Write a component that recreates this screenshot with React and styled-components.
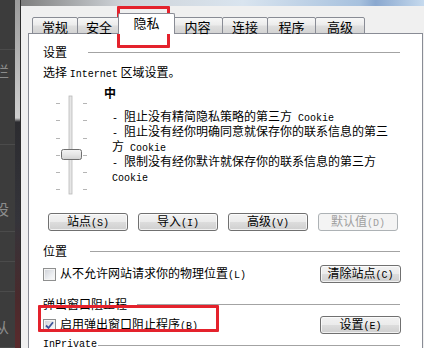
import React from 'react';
import styled, { createGlobalStyle } from 'styled-components';

const GlobalStyle = createGlobalStyle`
  html, body {
    margin: 0;
    padding: 0;
  }
  body {
    width: 424px;
    height: 348px;
    overflow: hidden;
    background: #3b3b3b;
    font-family: "Noto Sans CJK SC", "Liberation Sans", sans-serif;
    font-size: 12px;
    color: #000;
  }
`;

const tabs = [
  { label: '常规', w: 46 },
  { label: '安全', w: 44 },
  { label: '隐私', w: 57, active: true },
  { label: '内容', w: 51 },
  { label: '连接', w: 46 },
  { label: '程序', w: 49 },
  { label: '高级', w: 50 },
];

const backdropCells = [
  { h: 50 },
  { h: 95, ch: '栏', pad: 13 },
  { h: 87, ch: '设', pad: 56 },
  { h: 30 },
  { h: 30 },
  { h: 56, ch: '从', pad: 27 },
];

function Checkbox({ checked }) {
  return (
    <Box>
      {checked && (
        <svg width="9" height="9" viewBox="0 0 9 9">
          <path d="M1 4.5 L3.5 7 L8 1.2" fill="none" stroke="#3d5498" strokeWidth="1.8" />
        </svg>
      )}
    </Box>
  );
}

function Slider() {
  const ticks = [8, 25, 43, 60, 77, 94];
  return (
    <SliderBox>
      <svg width="32" height="100" viewBox="0 0 32 100">
        <defs>
          <linearGradient id="thumb" x1="0" y1="0" x2="0" y2="1">
            <stop offset="0" stopColor="#f4f4f4" />
            <stop offset="0.5" stopColor="#e6e6e6" />
            <stop offset="1" stopColor="#d2d2d2" />
          </linearGradient>
        </defs>
        <rect x="13" y="1" width="3" height="98" fill="#e6e6e6" stroke="#b9b9b9" strokeWidth="0.8" />
        {ticks.map((y) => (
          <g key={y}>
            <line x1="0" y1={y + 0.5} x2="4" y2={y + 0.5} stroke="#b5b5b5" />
            <line x1="27" y1={y + 0.5} x2="31" y2={y + 0.5} stroke="#b5b5b5" />
          </g>
        ))}
        <rect x="5.5" y="54.5" width="20" height="10" rx="2" fill="url(#thumb)" stroke="#6f6f6f" />
      </svg>
    </SliderBox>
  );
}

export default function App() {
  return (
    <Screen>
      <GlobalStyle />
      <Backdrop>
        {backdropCells.map((c, i) => (
          <BackdropCell key={i} $h={c.h} $pad={c.pad}>
            {c.ch && <Ghost>{c.ch}</Ghost>}
          </BackdropCell>
        ))}
      </Backdrop>
      <ScrollRail />
      <Window>
        <TitleEdge />
        <DialogBody>
          <TabRow>
            {tabs.map((t) => (
              <Tab key={t.label} $w={t.w} $active={t.active}>
                {t.label}
              </Tab>
            ))}
          </TabRow>
          <Panel>
            <GroupHeader>
              <span>设置</span>
              <Rule $gap={21} />
            </GroupHeader>
            <Intro>
              选择 <A>Internet</A> 区域设置。
            </Intro>
            <SliderSection>
              <Slider />
              <LevelColumn>
                <Level>中</Level>
                <Desc>
                  <div><A>- </A>阻止没有精简隐私策略的第三方<A> Cookie</A></div>
                  <div><A>- </A>阻止没有经你明确同意就保存你的联系信息的第三</div>
                  <div>方<A> Cookie</A></div>
                  <div><A>- </A>限制没有经你默许就保存你的联系信息的第三方</div>
                  <div><A>Cookie</A></div>
                </Desc>
              </LevelColumn>
            </SliderSection>
            <ButtonRow>
              <Button>站点<A>(S)</A></Button>
              <Button>导入<A>(I)</A></Button>
              <Button>高级<A>(V)</A></Button>
              <Button disabled>默认值<A>(D)</A></Button>
            </ButtonRow>
            <GroupHeader $top={14}>
              <span>位置</span>
              <Rule $gap={23} />
            </GroupHeader>
            <OptionRow $top={8}>
              <CheckLabel>
                <Checkbox />
                <span>从不允许网站请求你的物理位置<A>(L)</A></span>
              </CheckLabel>
              <Button $w={81}>清除站点<A>(C)</A></Button>
            </OptionRow>
            <GroupHeader $top={15}>
              <span>弹出窗口阻止程</span>
              <Rule $gap={10} />
            </GroupHeader>
            <OptionRow $top={6}>
              <CheckLabel>
                <Checkbox checked />
                <span>启用弹出窗口阻止程序<A>(B)</A></span>
              </CheckLabel>
              <Button $w={81}>设置<A>(E)</A></Button>
            </OptionRow>
            <GroupHeader $top={5}>
              <A>InPrivate</A>
              <Rule $gap={1} />
            </GroupHeader>
          </Panel>
        </DialogBody>
      </Window>
      <Annotation $left={117} $top={6} $w={53} $h={42} />
      <Annotation $left={38} $top={305} $w={181} $h={27} />
    </Screen>
  );
}

const Screen = styled.div`
  position: relative;
  display: flex;
  width: 424px;
  height: 348px;
  overflow: hidden;
`;

const Backdrop = styled.div`
  width: 15px;
  flex: none;
  display: flex;
  flex-direction: column;
  background: #3c3c3c;
  overflow: hidden;
`;

const BackdropCell = styled.div`
  height: ${({ $h }) => $h}px;
  flex: none;
  box-sizing: border-box;
  padding-top: ${({ $pad }) => $pad || 0}px;
  border-bottom: 1px solid #4b4b4b;
  line-height: 16px;
`;

const Ghost = styled.span`
  display: block;
  margin-left: -6px;
  font-size: 15px;
  color: #8c8c8c;
`;

const ScrollRail = styled.div`
  width: 5px;
  flex: none;
  background: linear-gradient(
    #9c9c9c 0px,
    #cfcfcf 118px,
    #2c2c30 122px,
    #34343a 220px,
    #4a2a2c 300px,
    #5a2a2c 348px
  );
`;

const Window = styled.div`
  flex: 1;
  display: flex;
  flex-direction: column;
  border-left: 1px solid #2e2e2e;
  background: #f0f0f0;
`;

const TitleEdge = styled.div`
  height: 6px;
  flex: none;
  background: linear-gradient(
    90deg,
    #7e7e7e 0%,
    #cfd3d8 25%,
    #d9e4ef 55%,
    #a7c1de 84%,
    #8aa8cf 88%,
    #c6daee 100%
  );
`;

const DialogBody = styled.div`
  flex: 1;
  padding: 7px 1px 0 7px;
`;

const TabRow = styled.div`
  position: relative;
  z-index: 1;
  display: flex;
  align-items: flex-end;
  height: 21px;
  margin: 0 0 -1px 4px;
`;

const Tab = styled.div`
  position: relative;
  box-sizing: border-box;
  width: ${({ $w }) => $w}px;
  height: ${({ $active }) => ($active ? 21 : 17)}px;
  margin-left: ${({ $active }) => ($active ? -3 : -1)}px;
  margin-right: ${({ $active }) => ($active ? -2 : 0)}px;
  padding-top: 1px;
  border: 1px solid #898c95;
  border-bottom: ${({ $active }) => ($active ? 'none' : '1px solid #898c95')};
  border-radius: 2px 2px 0 0;
  z-index: ${({ $active }) => ($active ? 2 : 1)};
  background: ${({ $active }) =>
    $active ? '#fff' : 'linear-gradient(#f7f7f7, #ececec 45%, #dedede 55%, #d3d3d3)'};
  font-size: 13px;
  line-height: 15px;
  text-align: center;

  &:first-child {
    margin-left: 0;
  }
`;

const Panel = styled.div`
  height: 400px;
  box-sizing: border-box;
  border: 1px solid #898c95;
  background: #fff;
  padding: 12px 21px 0 14px;
`;

const A = styled.span`
  font-family: "Liberation Mono", monospace;
  font-size: 10px;
`;

const GroupHeader = styled.div`
  display: flex;
  align-items: center;
  height: 12px;
  line-height: 12px;
  margin-top: ${({ $top }) => $top || 0}px;
  white-space: nowrap;
`;

const Rule = styled.div`
  flex: 1;
  height: 1px;
  margin: 1px 1px 0 ${({ $gap }) => $gap}px;
  background: #a3a3a3;
`;

const Intro = styled.div`
  margin-top: 8px;
  line-height: 12px;
  white-space: nowrap;
`;

const SliderSection = styled.div`
  display: flex;
  height: 108px;
  margin-top: 6px;
`;

const SliderBox = styled.div`
  margin: 8px 0 0 13px;
  width: 32px;
  height: 100px;
  svg {
    display: block;
  }
`;

const LevelColumn = styled.div`
  margin-left: 16px;
  display: flex;
  flex-direction: column;
`;

const Level = styled.div`
  font-weight: bold;
  line-height: 12px;
`;

const Desc = styled.div`
  margin: 11px 0 0 8px;
  line-height: 12px;
  white-space: nowrap;
`;

const ButtonRow = styled.div`
  display: flex;
  gap: 10px;
  margin-top: 18px;
  padding-left: 5px;
`;

const Button = styled.button`
  box-sizing: border-box;
  width: ${({ $w }) => $w || 80}px;
  height: 18px;
  padding: 0;
  border: 1px solid #707070;
  border-radius: 3px;
  background: linear-gradient(#f2f2f2, #ebebeb 50%, #dddddd 50%, #cfcfcf);
  box-shadow: inset 0 0 0 1px rgba(255, 255, 255, 0.7);
  font-family: "Noto Sans CJK SC", "Liberation Sans", sans-serif;
  font-size: 12px;
  line-height: 14px;
  color: #000;

  &:disabled {
    border-color: #adb2b5;
    background: #f4f4f4;
    color: #a0a0a0;
    box-shadow: none;
  }
`;

const OptionRow = styled.div`
  display: flex;
  align-items: center;
  justify-content: space-between;
  height: 18px;
  margin-top: ${({ $top }) => $top}px;
  white-space: nowrap;
`;

const CheckLabel = styled.label`
  display: flex;
  align-items: center;
  gap: 4px;
  line-height: 12px;
`;

const Box = styled.span`
  box-sizing: border-box;
  width: 13px;
  height: 13px;
  display: flex;
  align-items: center;
  justify-content: center;
  border: 1px solid #8e8f8f;
  background: linear-gradient(135deg, #cdd0d6, #eceef1 60%, #fbfbfb);
  box-shadow: inset 0 0 0 1px #f4f4f4;
`;

const Annotation = styled.div`
  position: absolute;
  left: ${({ $left }) => $left}px;
  top: ${({ $top }) => $top}px;
  width: ${({ $w }) => $w}px;
  height: ${({ $h }) => $h}px;
  box-sizing: border-box;
  border: 3px solid #e4222c;
  border-radius: 1px;
  pointer-events: none;
`;
